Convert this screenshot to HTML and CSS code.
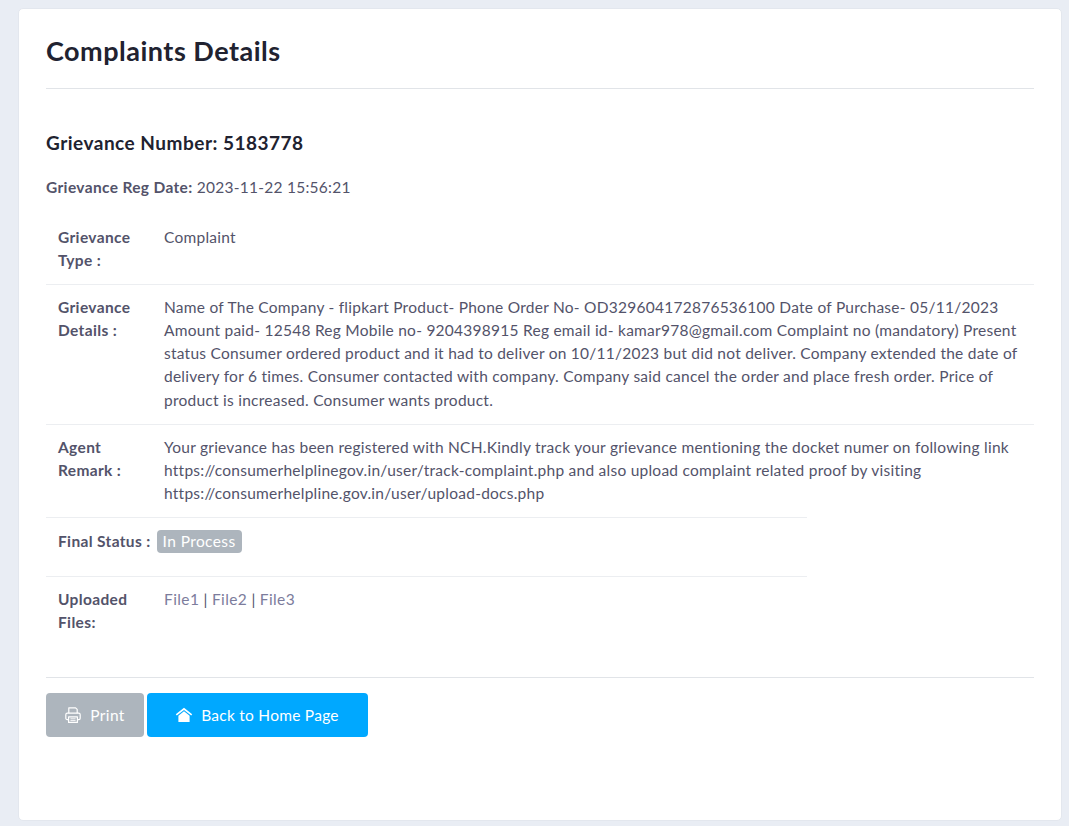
FILE: index.html
```html
<!DOCTYPE html>
<html lang="en">
<head>
  <meta charset="UTF-8">
  <title>Complaints Details</title>
  <link rel="stylesheet" href="styles.css">
</head>
<body>
  <div class="card">
    <h1>Complaints Details</h1>
    <hr class="rule">
    <h2>Grievance Number: 5183778</h2>
    <p class="reg-date"><b>Grievance Reg Date:</b> 2023-11-22 15:56:21</p>

    <div class="row">
      <div class="label">Grievance Type :</div>
      <div class="value">Complaint</div>
    </div>
    <div class="row">
      <div class="label">Grievance Details :</div>
      <div class="value">Name of The Company - flipkart Product- Phone Order No- OD329604172876536100 Date of Purchase- 05/11/2023 Amount paid- 12548 Reg Mobile no- 9204398915 Reg email id- kamar978@gmail.com Complaint no (mandatory) Present status Consumer ordered product and it had to deliver on 10/11/2023 but did not deliver. Company extended the date of delivery for 6 times. Consumer contacted with company. Company said cancel the order and place fresh order. Price of product is increased. Consumer wants product.</div>
    </div>
    <div class="row no-line">
      <div class="label">Agent Remark :</div>
      <div class="value">Your grievance has been registered with NCH.Kindly track your grievance mentioning the docket numer on following link https://consumerhelplinegov.in/user/track-complaint.php and also upload complaint related proof by visiting https://consumerhelpline.gov.in/user/upload-docs.php</div>
    </div>
    <div class="row short status-row">
      <div class="label nowrap">Final Status :</div>
      <span class="badge">In Process</span>
    </div>
    <div class="row short files-row">
      <div class="label">Uploaded Files:</div>
      <div class="value"><a href="#">File1</a> | <a href="#">File2</a> | <a href="#">File3</a></div>
    </div>

    <hr class="rule bottom">
    <div class="actions">
      <a class="btn btn-grey" href="#">
        <svg class="icon" viewBox="0 0 16 16" fill="none" stroke="#fff" stroke-width="1.2" stroke-linejoin="round">
          <path d="M3.8 6.2V.8h6.8l1.6 1.6v3.8"/>
          <path d="M3.6 12.6H2.2c-.8 0-1.4-.6-1.4-1.4V7.8c0-.9.7-1.6 1.6-1.6h11.2c.9 0 1.6.7 1.6 1.6v3.4c0 .8-.6 1.4-1.4 1.4h-1.4"/>
          <path d="M3.6 9.8h8.8v5.6H3.6z"/>
          <path d="M5.4 11.8h5.2M5.4 13.6h5.2" stroke-width=".9"/>
        </svg>
        Print
      </a>
      <a class="btn btn-blue" href="#">
        <svg class="icon" viewBox="0 0 16 16" fill="#fff">
          <path d="M8 .8-.2 7.2l1 1.3L8 2.9l7.2 5.6 1-1.3z"/>
          <path d="M8 4.3 2.4 8.7V15h11.2V8.7z"/>
        </svg>
        Back to Home Page
      </a>
    </div>
  </div>
</body>
</html>
```

FILE: styles.css
```css
* {
  box-sizing: border-box;
}
body {
  margin: 0;
  padding: 8px 7px 5px 18px;
  background: #e9edf4;
  font-family: Lato, sans-serif;
  font-size: 15.5px;
  line-height: 23.25px;
  letter-spacing: .25px;
  color: #53536a;
}
.card {
  height: 813px;
  padding: 0 27px;
  background: #fff;
  border: 1px solid #e3e7ee;
  border-radius: 5px;
}
h1 {
  margin: 0;
  padding-top: 24px;
  font-size: 27px;
  line-height: 36px;
  font-weight: 700;
  letter-spacing: .5px;
  color: #212230;
}
.rule {
  margin: 0;
  border: none;
  border-top: 1px solid #e1e4e8;
}
h1 + .rule {
  margin-top: 19px;
}
h2 {
  margin: 41px 0 0;
  font-size: 19px;
  line-height: 26px;
  font-weight: 700;
  letter-spacing: .5px;
  color: #212230;
}
.reg-date {
  margin: 20px 0 0;
}
b, .label {
  font-weight: 700;
  letter-spacing: .35px;
}
.row {
  display: flex;
  padding: 11px 0 12px 12px;
  border-bottom: 1px solid #eceef1;
}
.row:first-of-type {
  margin-top: 15.6px;
  padding-bottom: 11.4px;
}
.no-line {
  border-bottom: none;
  padding-bottom: 11px;
}
.label {
  flex: none;
  width: 82px;
  margin-right: 24px;
}
.value {
  flex: 1;
}
.value a {
  color: #7c7c9c;
  letter-spacing: .4px;
  text-decoration: none;
}
.short {
  width: 761px;
  border-top: 1px solid #eceef1;
}
.status-row {
  height: 59px;
  padding-top: 12px;
  border-bottom: none;
}
.nowrap {
  width: auto;
  margin-right: 6px;
  white-space: nowrap;
}
.badge {
  padding: 0 6px;
  height: 23px;
  background: #adb5bd;
  color: #fff;
  border-radius: 4px;
  line-height: 23px;
  letter-spacing: .4px;
}
.files-row {
  border-bottom: none;
  height: 101px;
}
.actions {
  display: flex;
  gap: 3px;
  margin-top: 15px;
}
.btn {
  display: flex;
  align-items: center;
  justify-content: center;
  gap: 9px;
  height: 44px;
  padding-top: 1px;
  border-radius: 4px;
  color: #fff;
  text-decoration: none;
}
.btn-grey {
  width: 98px;
  letter-spacing: .4px;
  background: #adb5bd;
}
.btn-blue {
  width: 221px;
  background: #00a8ff;
}
.icon {
  width: 16px;
  height: 16px;
  overflow: visible;
}
```
